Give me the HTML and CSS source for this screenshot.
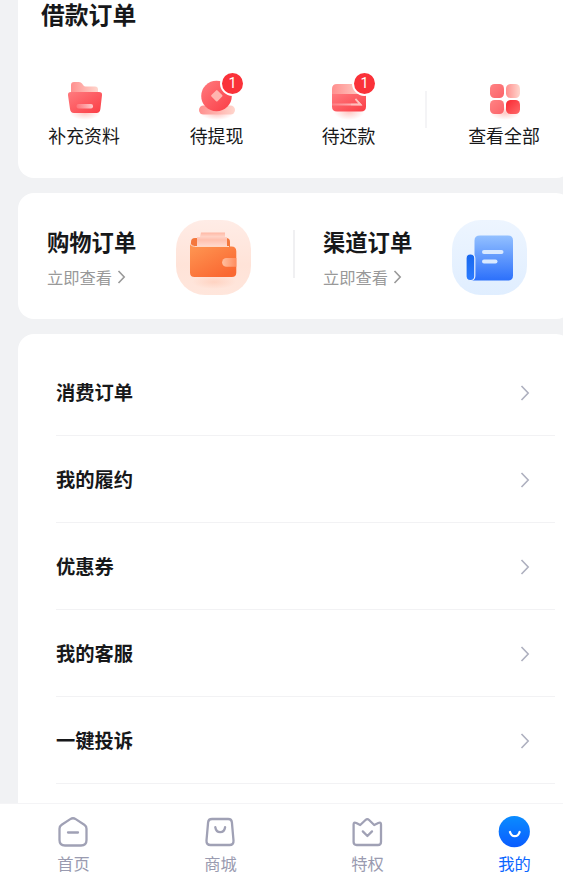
FILE: index.html
```html
<!DOCTYPE html>
<html lang="zh-CN">
<head>
  <meta charset="UTF-8" />
  <meta name="viewport" content="width=device-width, initial-scale=1.0"/>
  <title>我的</title>
  <link rel="stylesheet" href="styles.css">
</head>
<body>

  <main class="content">
    <!-- 借款订单 -->
    <section class="card loan">
      <h2>借款订单</h2>
      <div class="loan-items">
        <a class="loan-item">
          <svg class="loan-icon" viewBox="0 0 50 50">
            <defs>
              <linearGradient id="red" x1="0" y1="0" x2="1" y2="1"><stop offset="0" stop-color="#ff7b7f"/><stop offset="1" stop-color="#fb3c44"/></linearGradient>
              <linearGradient id="pink" x1="0" y1="0" x2="1" y2="0"><stop offset="0" stop-color="#ff8f8e"/><stop offset="1" stop-color="#ffd6cd"/></linearGradient>
              <linearGradient id="shine" x1="0" y1="0" x2="1" y2="0"><stop offset="0" stop-color="#fff" stop-opacity=".15"/><stop offset="1" stop-color="#fff" stop-opacity=".7"/></linearGradient>
              <radialGradient id="glow"><stop offset="0" stop-color="#ff7a70" stop-opacity=".4"/><stop offset="1" stop-color="#ff7a70" stop-opacity="0"/></radialGradient>
            </defs>
            <ellipse cx="25" cy="43" rx="15" ry="7" fill="url(#glow)"/>
            <path d="M11 28V15q0-3 3-3h5q2 0 3 1.500l1.500 2q.8 1 2 1H35q3 0 3 3V28z" fill="url(#pink)"/>
            <path d="M11 22H39q3.400 0 3 3.200L40.400 39q-.5 4-4 4H14q-3.500 0-4-4L8 25.200Q7.700 22 11 22z" fill="url(#red)"/>
            <rect x="16.500" y="34" width="16.500" height="4.500" rx="2" fill="url(#shine)"/>
          </svg>
          <span>补充资料</span>
        </a>
        <a class="loan-item">
          <svg class="loan-icon" viewBox="0 0 50 50">
            <ellipse cx="25" cy="44" rx="16" ry="6" fill="url(#glow)"/>
            <rect x="7" y="35.500" width="36" height="9" rx="4.500" fill="url(#pink)"/>
            <circle cx="24.500" cy="26" r="15.300" fill="url(#red)"/>
            <rect x="20.500" y="21.500" width="8.600" height="8.600" rx="1" transform="rotate(45 24.800 25.800)" fill="#ffb5af"/>
          </svg>
          <span>待提现</span>
          <b class="badge">1</b>
        </a>
        <a class="loan-item">
          <svg class="loan-icon" viewBox="0 0 50 50">
            <ellipse cx="25" cy="42" rx="15" ry="8" fill="url(#glow)"/>
            <path d="M8 24v-5q0-5 5-5H37q5 0 5 5v5z" fill="url(#pink)"/>
            <path d="M8 24H42V36.500q0 5-5 5H13q-5 0-5-5z" fill="url(#red)"/>
            <path d="M8 34.500H36.500L31.500 29" fill="none" stroke="url(#shine)" stroke-width="1.800"/>
            <path d="M27 34.600h9.500L31.500 29" fill="none" stroke="#ffc0bd" stroke-width="1.500"/>
          </svg>
          <span>待还款</span>
          <b class="badge">1</b>
        </a>
        <i class="loan-line"></i>
        <a class="loan-item loan-all">
          <svg class="loan-icon" viewBox="0 0 50 50">
            <defs>
              <linearGradient id="soft" x1="0" y1="0" x2="1" y2="1"><stop offset="0" stop-color="#ff8384"/><stop offset="1" stop-color="#fb6268"/></linearGradient>
              <linearGradient id="deep" x1="0" y1="0" x2="1" y2="1"><stop offset="0" stop-color="#f92832"/><stop offset="1" stop-color="#ff6a6a"/></linearGradient>
            </defs>
            <ellipse cx="25" cy="43" rx="15" ry="7" fill="url(#glow)"/>
            <rect x="10" y="14" width="14" height="14" rx="4.500" fill="url(#soft)"/>
            <rect x="26" y="14" width="14" height="14" rx="4.500" fill="url(#pink)"/>
            <rect x="10" y="30" width="14" height="14" rx="4.500" fill="url(#soft)"/>
            <rect x="26" y="30" width="14" height="14" rx="4.500" fill="url(#deep)"/>
          </svg>
          <span>查看全部</span>
        </a>
      </div>
    </section>

    <!-- 购物 / 渠道 -->
    <section class="card orders">
      <a class="order">
        <div class="order-text">
          <h3>购物订单</h3>
          <p>立即查看<svg class="more" viewBox="0 0 9 14"><path d="M1.500 1L7.200 7L1.500 13"/></svg></p>
        </div>
        <svg class="order-icon" viewBox="0 0 75 75">
          <defs>
            <linearGradient id="peach" x1="0" y1="0" x2="0" y2="1"><stop offset="0" stop-color="#ffece6"/><stop offset=".6" stop-color="#ffe3d8"/><stop offset="1" stop-color="#ffe6dc"/></linearGradient>
            <linearGradient id="wallet" x1="0" y1="0" x2=".7" y2="1"><stop offset="0" stop-color="#ff9a55"/><stop offset="1" stop-color="#fa6832"/></linearGradient>
            <linearGradient id="paper" x1="0" y1="0" x2="0" y2="1"><stop offset="0" stop-color="#ffb8a4"/><stop offset=".25" stop-color="#ffd2c5"/><stop offset=".45" stop-color="#ffc0ae"/><stop offset="1" stop-color="#ffe3db"/></linearGradient>
            <linearGradient id="clasp" x1="0" y1="0" x2="1" y2="0"><stop offset="0" stop-color="#ffc0a0"/><stop offset="1" stop-color="#ff8c5e"/></linearGradient>
            <radialGradient id="warm"><stop offset="0" stop-color="#ff8c60" stop-opacity=".2"/><stop offset="1" stop-color="#ff8c60" stop-opacity="0"/></radialGradient>
          </defs>
          <rect width="75" height="75" rx="29" fill="url(#peach)"/>
          <ellipse cx="38" cy="62" rx="22" ry="7" fill="url(#warm)"/>
          <rect x="15" y="18" width="39" height="20" rx="4" fill="#f4783d"/>
          <path d="M25 12.500H49V17H51V29H21V17H24z" fill="url(#paper)"/>
          <path d="M14 22q0 4.500 4 4.500H55.500q4.800 0 4.800 4.800V52.500q0 4.500-4.500 4.500H18.500q-4.500 0-4.500-4.500z" fill="url(#wallet)"/>
          <path d="M14.200 23q.5 3.500 4.500 3.500H53" fill="none" stroke="#ffd8c5" stroke-width="1"/>
          <path d="M60.300 38H50.500a4.400 4.400 0 0 0 0 8.800H60.300z" fill="url(#clasp)"/>
        </svg>
      </a>
      <i class="order-line"></i>
      <a class="order">
        <div class="order-text">
          <h3>渠道订单</h3>
          <p>立即查看<svg class="more" viewBox="0 0 9 14"><path d="M1.500 1L7.200 7L1.500 13"/></svg></p>
        </div>
        <svg class="order-icon" viewBox="0 0 75 75">
          <defs>
            <linearGradient id="sky" x1="0" y1="0" x2="0" y2="1"><stop offset="0" stop-color="#edf5ff"/><stop offset="1" stop-color="#e0eeff"/></linearGradient>
            <linearGradient id="doc" x1="0" y1="0" x2="0" y2="1"><stop offset="0" stop-color="#93c0ff"/><stop offset="1" stop-color="#2c70fb"/></linearGradient>
            <linearGradient id="fold" x1="0" y1="0" x2="0" y2="1"><stop offset="0" stop-color="#1767ee"/><stop offset="1" stop-color="#2c7cff"/></linearGradient>
          </defs>
          <rect width="75" height="75" rx="29" fill="url(#sky)"/>
          <path d="M28 15.500H56q5 0 5 5V55.500q0 5-5 5H19q3.500-1.500 3.500-5V20.500q0-5 5.500-5z" fill="url(#doc)"/>
          <rect x="14" y="34" width="8.800" height="26.500" rx="4.200" fill="url(#fold)" stroke="#eaf3ff" stroke-width="1.200"/>
          <rect x="30" y="30" width="21.500" height="4" rx="2" fill="#d9e9ff"/>
          <rect x="30" y="39.500" width="15.500" height="4" rx="2" fill="#d9e9ff"/>
        </svg>
      </a>
    </section>

    <section class="card menu">
      <a class="menu-row">消费订单<svg class="arrow" viewBox="0 0 10 16"><path d="M1.500 1L8.200 8L1.500 15"/></svg></a>
      <a class="menu-row">我的履约<svg class="arrow" viewBox="0 0 10 16"><path d="M1.500 1L8.200 8L1.500 15"/></svg></a>
      <a class="menu-row">优惠券<svg class="arrow" viewBox="0 0 10 16"><path d="M1.500 1L8.200 8L1.500 15"/></svg></a>
      <a class="menu-row">我的客服<svg class="arrow" viewBox="0 0 10 16"><path d="M1.500 1L8.200 8L1.500 15"/></svg></a>
      <a class="menu-row">一键投诉<svg class="arrow" viewBox="0 0 10 16"><path d="M1.500 1L8.200 8L1.500 15"/></svg></a>
    </section>
  </main>

  <nav class="tabbar">
    <a class="tab">
      <svg class="tab-icon" viewBox="0 0 32 32">
        <path d="M13.300 3.100L4.700 8.700Q2.500 10.100 2.500 12.700V24Q2.500 29.500 8 29.500H24Q29.500 29.500 29.500 24V12.700Q29.500 10.100 27.300 8.700L18.700 3.100Q16 1.400 13.300 3.100z"/>
        <path d="M11 16.500H21"/>
      </svg>
      <span>首页</span>
    </a>
    <a class="tab">
      <svg class="tab-icon" viewBox="0 0 32 32">
        <path d="M8 3H24.200Q27.600 3 27.900 6.300L29.500 24.500Q29.800 29 25.500 29H6.500Q2.200 29 2.500 24.500L4.100 6.300Q4.400 3 8 3z"/>
        <path d="M11.300 11.200q.8 5 4.900 5t4.900-5"/>
      </svg>
      <span>商城</span>
    </a>
    <a class="tab">
      <svg class="tab-icon" viewBox="0 0 32 32">
        <path d="M2.600 8.500Q2.600 5.700 5.300 7L9.200 9L14.500 4Q16.300 2.300 18.100 4L23.200 9L27.300 7Q30 5.700 30 8.500V26Q30 29 27 29H5.600Q2.600 29 2.600 26z"/>
        <path d="M11.800 15.400L16.400 20L21 15.400"/>
      </svg>
      <span>特权</span>
    </a>
    <a class="tab active">
      <svg class="tab-icon" viewBox="0 0 32 32">
        <defs><linearGradient id="me" x1="0" y1="0" x2="0" y2="1"><stop offset="0" stop-color="#0a8cff"/><stop offset="1" stop-color="#0a5cff"/></linearGradient></defs>
        <circle cx="16.300" cy="15.600" r="15.600" fill="url(#me)"/>
        <path class="smile" d="M12 16q1.200 4.200 4.800 4.200T21.600 16"/>
      </svg>
      <span>我的</span>
    </a>
  </nav>

</body>
</html>
```
FILE: styles.css
```css
html, body {
  margin: 0;
  padding: 0;
  height: 100%;
  overflow: hidden;
}

* {
  box-sizing: border-box;
}

body {
  display: flex;
  flex-direction: column;
  height: 100vh;
  font-family: "Noto Sans CJK SC", sans-serif;
  background-color: #f1f2f4;
  color: #17181a;
}

h2, h3, p {
  margin: 0;
}

svg {
  display: block;
  flex: none;
}

.content {
  flex: 1;
  min-height: 0;
  overflow: hidden;
  padding-left: 18px;
  display: flex;
  flex-direction: column;
  gap: 15px;
}

/* cards run past the right edge of the screen */
.card {
  flex: none;
  width: 554px;
  background-color: #fff;
  border-radius: 16px;
}

/* Loan orders */
.loan {
  height: 178px;
  border-radius: 0 0 16px 16px;
}

.loan h2 {
  padding-left: 23px;
  font-size: 23.8px;
  line-height: 28px;
}

.loan-items {
  display: flex;
  padding-top: 46px;
}

.loan-item {
  position: relative;
  width: 132px;
  display: flex;
  flex-direction: column;
  align-items: center;
  font-size: 17.9px;
  line-height: 24px;
}

.loan-item + .loan-item {
  left: 0.5px;
}

.loan-icon {
  width: 50px;
  height: 50px;
  margin-top: -4px;
  margin-left: 1px;
  margin-bottom: 3px;
}

.loan-line {
  width: 2px;
  height: 37px;
  margin: 17px 0 0 11px;
  background-color: #f4f4f6;
}

.loan-all {
  margin-left: 11px;
}

.badge {
  position: absolute;
  left: 69.5px;
  top: -3px;
  width: 25px;
  height: 25px;
  border: 2px solid #fff;
  border-radius: 50%;
  background-color: #fa3239;
  color: #fff;
  font-family: Roboto, sans-serif;
  font-size: 14.5px;
  font-weight: 400;
  line-height: 22px;
  text-align: center;
}

/* Shopping and channel orders */
.orders {
  height: 126px;
  display: flex;
  align-items: center;
  padding: 1px 0 0 29px;
}

.order {
  display: flex;
  align-items: center;
}

.order-text {
  width: 129px;
}

.order h3 {
  font-size: 22.3px;
  line-height: 30px;
}

.order p {
  display: flex;
  align-items: center;
  gap: 5px;
  margin-top: 10px;
  color: #999;
  font-size: 16.3px;
  line-height: 22px;
}

.more {
  width: 9px;
  height: 14px;
}

.order-icon {
  width: 75px;
  height: 75px;
  margin-top: 1px;
}

.order-line {
  width: 2px;
  height: 48px;
  margin: -6px 28px 0 42px;
  background-color: #f0f0f2;
}

.more path, .arrow path {
  fill: none;
  stroke: #999;
  stroke-width: 1.6;
}

/* Menu list */
.menu {
  height: 500px;
  padding: 15px 17px 0 38px;
}

.menu-row {
  display: flex;
  align-items: center;
  justify-content: space-between;
  height: 87px;
  padding-right: 25px;
  border-bottom: 1px solid #f2f2f4;
  font-size: 19.3px;
  font-weight: 700;
}

.arrow {
  width: 10px;
  height: 16px;
  margin-top: 1px;
}

.arrow path {
  stroke: #aeb0bf;
}

/* Bottom tabs */
.tabbar {
  flex: none;
  display: flex;
  height: 77px;
  border-top: 1px solid #f4f4f6;
  background-color: #fff;
}

.tab {
  flex: none;
  width: 147px;
  padding-top: 12px;
  display: flex;
  flex-direction: column;
  align-items: center;
  gap: 4px;
  color: #9a9bb0;
  font-size: 16.3px;
  line-height: 22px;
}

.tab-icon {
  width: 32px;
  height: 32px;
  margin-right: 1px;
  fill: none;
  stroke: #a0a1b5;
  stroke-width: 2.3;
  stroke-linecap: round;
  stroke-linejoin: round;
}

.tab-icon circle {
  stroke: none;
}

.tab-icon .smile {
  stroke: #fff;
}

.active {
  color: #0a66ff;
}
```
